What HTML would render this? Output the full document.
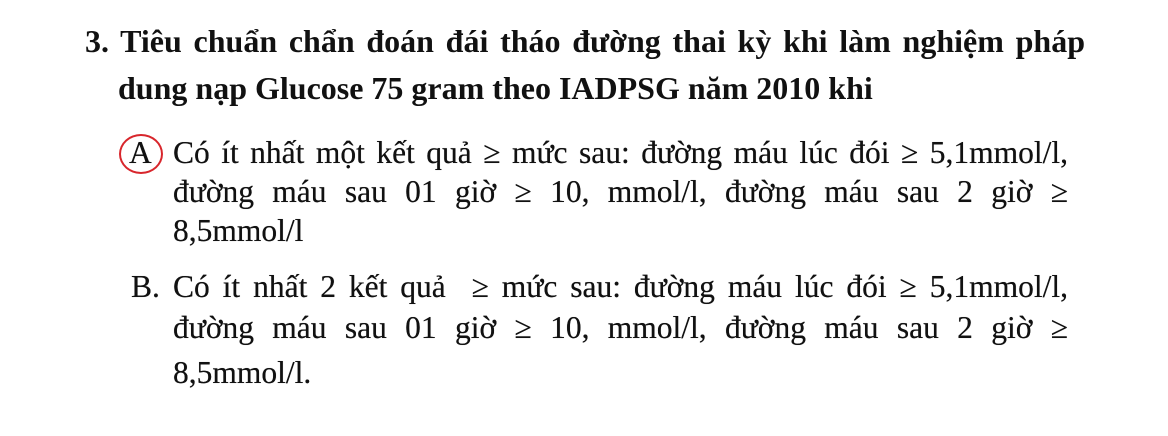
<!DOCTYPE html>
<html><head><meta charset="utf-8"><style>
html,body{margin:0;padding:0;background:#fff;width:1168px;height:436px;overflow:hidden;position:relative}
.l{position:absolute;white-space:nowrap;line-height:40px;font-family:"Liberation Serif",serif;color:#111}
.j{text-align:justify;text-align-last:justify;white-space:normal}
.h{font-weight:bold;font-size:32px}
.b{font-size:31.5px;text-shadow:0 0 0.4px #111}
.circ{position:absolute;left:119px;top:134px;width:44px;height:40px;border:2.5px solid #d8262c;border-radius:50%;box-sizing:border-box}
</style></head><body>
<div class="l h j" style="left:85px;top:21px;width:1000px">3. Tiêu chuẩn chẩn đoán đái tháo đường thai kỳ khi làm nghiệm pháp</div>
<div class="l h" style="left:118px;top:68px">dung nạp Glucose 75 gram theo IADPSG năm 2010 khi</div>
<div class="circ"></div>
<div class="l b" style="left:129px;top:133px">A</div>
<div class="l b j" style="left:173px;top:133px;width:895px">Có ít nhất một kết quả ≥ mức sau: đường máu lúc đói ≥ 5,1mmol/l,</div>
<div class="l b j" style="left:173px;top:172px;width:895px">đường máu sau 01 giờ ≥ 10, mmol/l, đường máu sau 2 giờ ≥</div>
<div class="l b" style="left:173px;top:211px">8,5mmol/l</div>
<div class="l b" style="left:131px;top:267px">B.</div>
<div class="l b j" style="left:173px;top:267px;width:895px">Có ít nhất 2 kết quả &nbsp;≥ mức sau: đường máu lúc đói ≥ 5,1mmol/l,</div>
<div class="l b j" style="left:173px;top:308px;width:895px">đường máu sau 01 giờ ≥ 10, mmol/l, đường máu sau 2 giờ ≥</div>
<div class="l b" style="left:173px;top:353px">8,5mmol/l.</div>
</body></html>
